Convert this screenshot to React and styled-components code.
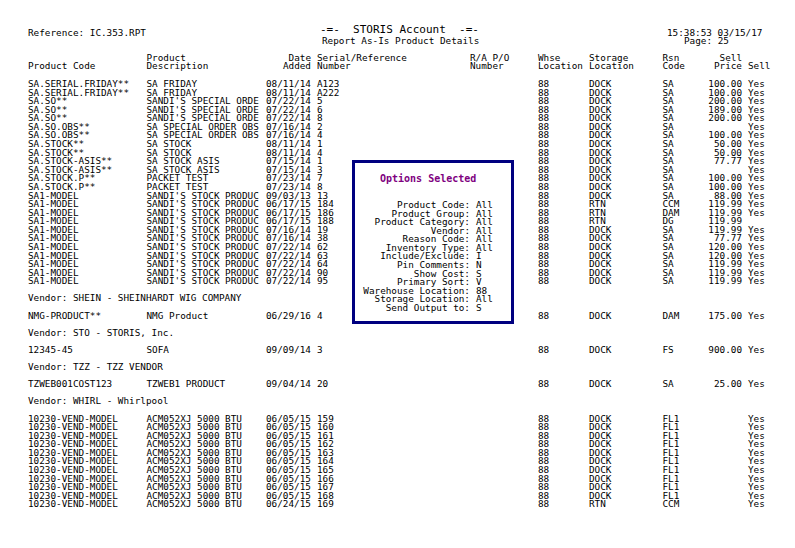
import React from 'react';
import styled, { createGlobalStyle } from 'styled-components';

const GlobalStyle = createGlobalStyle`
  html, body {
    margin: 0;
    padding: 0;
    background: #fff;
  }
`;

const Page = styled.div`
  position: relative;
  width: 795px;
  height: 548px;
  overflow: hidden;
  padding: 24px 0 0 28px;
  box-sizing: border-box;
  font-family: "DejaVu Sans Mono", monospace;
  font-size: 9.33px;
  color: #000;
  white-space: pre;
`;

const TopBar = styled.div`
  display: grid;
  grid-template-columns: 293px 346px auto;
  height: 24px;
`;

const RefLabel = styled.div`
  padding-top: 4px;
  line-height: 9px;
`;

const TitleBlock = styled.div`
  line-height: 8px;
  padding-left: 1px;
`;

const Title = styled.div`
  font-size: 11px;
  line-height: 11px;
  margin: 0 0 2px -2px;
`;

const Stamp = styled.div`
  padding-top: 5px;
  line-height: 8px;
`;

const StampPage = styled.div`
  padding-left: 17px;
`;

const columns = '118.5px 119.5px 51px 153px 68px 51px 73.5px 40px 45.5px 40px';

const HeadRow = styled.div`
  display: grid;
  grid-template-columns: ${columns};
  margin-top: 6px;
  height: 26px;
  line-height: 8px;
`;

const Cell = styled.div`
  text-align: ${(p) => (p.$right ? 'right' : 'left')};
  padding-right: ${(p) => (p.$right ? '6px' : '0')};
`;

const Rows = styled.div`
  display: flex;
  flex-direction: column;
`;

const Row = styled.div`
  display: grid;
  grid-template-columns: ${columns};
  height: 8.58px;
  line-height: 8.58px;
`;

const VendorRow = styled.div`
  height: 8.58px;
  line-height: 8.58px;
  margin: 8.58px 0;
`;

const OptionsBox = styled.div`
  position: absolute;
  left: 352px;
  top: 160px;
  width: 162px;
  height: 164px;
  box-sizing: border-box;
  border: 3px solid #000080;
  background: #fff;
  padding-top: 10px;
`;

const OptionsTitle = styled.div`
  color: #800080;
  font-weight: bold;
  font-size: 10px;
  line-height: 12px;
  padding-left: 25px;
  margin-bottom: 16px;
`;

const OptionRow = styled.div`
  display: grid;
  grid-template-columns: 115px auto;
  column-gap: 6px;
  height: 8.58px;
  line-height: 8.58px;
`;

const OptionLabel = styled.div`
  text-align: right;
`;

const sandi = "SANDI'S SPECIAL ORDE";
const obs = 'SA SPECIAL ORDER OBS';
const stock = "SANDI'S STOCK PRODUC";
const btu = 'ACM052XJ 5000 BTU';

const groups = [
  {
    rows: [
      ['SA.SERIAL.FRIDAY**', 'SA FRIDAY', '08/11/14', 'A123', 'DOCK', 'SA', '100.00', 'Yes'],
      ['SA.SERIAL.FRIDAY**', 'SA FRIDAY', '08/11/14', 'A222', 'DOCK', 'SA', '100.00', 'Yes'],
      ['SA.SO**', sandi, '07/22/14', '5', 'DOCK', 'SA', '200.00', 'Yes'],
      ['SA.SO**', sandi, '07/22/14', '6', 'DOCK', 'SA', '189.00', 'Yes'],
      ['SA.SO**', sandi, '07/22/14', '8', 'DOCK', 'SA', '200.00', 'Yes'],
      ['SA.SO.OBS**', obs, '07/16/14', '2', 'DOCK', 'SA', '', 'Yes'],
      ['SA.SO.OBS**', obs, '07/16/14', '4', 'DOCK', 'SA', '100.00', 'Yes'],
      ['SA.STOCK**', 'SA STOCK', '08/11/14', '1', 'DOCK', 'SA', '50.00', 'Yes'],
      ['SA.STOCK**', 'SA STOCK', '08/11/14', '4', 'DOCK', 'SA', '50.00', 'Yes'],
      ['SA.STOCK-ASIS**', 'SA STOCK ASIS', '07/15/14', '1', 'DOCK', 'SA', '77.77', 'Yes'],
      ['SA.STOCK-ASIS**', 'SA STOCK ASIS', '07/15/14', '3', 'DOCK', 'SA', '', 'Yes'],
      ['SA.STOCK.P**', 'PACKET TEST', '07/23/14', '7', 'DOCK', 'SA', '100.00', 'Yes'],
      ['SA.STOCK.P**', 'PACKET TEST', '07/23/14', '8', 'DOCK', 'SA', '100.00', 'Yes'],
      ['SA1-MODEL', stock, '09/03/13', '13', 'DOCK', 'SA', '88.00', 'Yes'],
      ['SA1-MODEL', stock, '06/17/15', '184', 'RTN', 'CCM', '119.99', 'Yes'],
      ['SA1-MODEL', stock, '06/17/15', '186', 'RTN', 'DAM', '119.99', 'Yes'],
      ['SA1-MODEL', stock, '06/17/15', '188', 'RTN', 'DG', '119.99', ''],
      ['SA1-MODEL', stock, '07/16/14', '19', 'DOCK', 'SA', '119.99', 'Yes'],
      ['SA1-MODEL', stock, '07/16/14', '38', 'DOCK', 'SA', '77.77', 'Yes'],
      ['SA1-MODEL', stock, '07/22/14', '62', 'DOCK', 'SA', '120.00', 'Yes'],
      ['SA1-MODEL', stock, '07/22/14', '63', 'DOCK', 'SA', '120.00', 'Yes'],
      ['SA1-MODEL', stock, '07/22/14', '64', 'DOCK', 'SA', '119.99', 'Yes'],
      ['SA1-MODEL', stock, '07/22/14', '90', 'DOCK', 'SA', '119.99', 'Yes'],
      ['SA1-MODEL', stock, '07/22/14', '95', 'DOCK', 'SA', '119.99', 'Yes'],
    ],
  },
  {
    vendor: 'SHEIN - SHEINHARDT WIG COMPANY',
    rows: [['NMG-PRODUCT**', 'NMG Product', '06/29/16', '4', 'DOCK', 'DAM', '175.00', 'Yes']],
  },
  {
    vendor: 'STO - STORIS, Inc.',
    rows: [['12345-45', 'SOFA', '09/09/14', '3', 'DOCK', 'FS', '900.00', 'Yes']],
  },
  {
    vendor: 'TZZ - TZZ VENDOR',
    rows: [['TZWEB001COST123', 'TZWEB1 PRODUCT', '09/04/14', '20', 'DOCK', 'SA', '25.00', 'Yes']],
  },
  {
    vendor: 'WHIRL - Whirlpool',
    rows: [
      ['10230-VEND-MODEL', btu, '06/05/15', '159', 'DOCK', 'FL1', '', 'Yes'],
      ['10230-VEND-MODEL', btu, '06/05/15', '160', 'DOCK', 'FL1', '', 'Yes'],
      ['10230-VEND-MODEL', btu, '06/05/15', '161', 'DOCK', 'FL1', '', 'Yes'],
      ['10230-VEND-MODEL', btu, '06/05/15', '162', 'DOCK', 'FL1', '', 'Yes'],
      ['10230-VEND-MODEL', btu, '06/05/15', '163', 'DOCK', 'FL1', '', 'Yes'],
      ['10230-VEND-MODEL', btu, '06/05/15', '164', 'DOCK', 'FL1', '', 'Yes'],
      ['10230-VEND-MODEL', btu, '06/05/15', '165', 'DOCK', 'FL1', '', 'Yes'],
      ['10230-VEND-MODEL', btu, '06/05/15', '166', 'DOCK', 'FL1', '', 'Yes'],
      ['10230-VEND-MODEL', btu, '06/05/15', '167', 'DOCK', 'FL1', '', 'Yes'],
      ['10230-VEND-MODEL', btu, '06/05/15', '168', 'DOCK', 'FL1', '', 'Yes'],
      ['10230-VEND-MODEL', btu, '06/24/15', '169', 'RTN', 'CCM', '', 'Yes'],
    ],
  },
];

const options = [
  ['Product Code:', 'All'],
  ['Product Group:', 'All'],
  ['Product Category:', 'All'],
  ['Vendor:', 'All'],
  ['Reason Code:', 'All'],
  ['Inventory Type:', 'All'],
  ['Include/Exclude:', 'I'],
  ['Pin Comments:', 'N'],
  ['Show Cost:', 'S'],
  ['Primary Sort:', 'V'],
  ['Warehouse Location:', '88'],
  ['Storage Location:', 'All'],
  ['Send Output to:', 'S'],
];

const DataRow = ({ row }) => {
  const [code, desc, date, serial, storage, rsn, price, sell] = row;
  return (
    <Row>
      <Cell>{code}</Cell>
      <Cell>{desc}</Cell>
      <Cell>{date}</Cell>
      <Cell>{serial}</Cell>
      <Cell />
      <Cell>88</Cell>
      <Cell>{storage}</Cell>
      <Cell>{rsn}</Cell>
      <Cell $right>{price}</Cell>
      <Cell>{sell}</Cell>
    </Row>
  );
};

export default function App() {
  return (
    <Page>
      <GlobalStyle />
      <TopBar>
        <RefLabel>Reference: IC.353.RPT</RefLabel>
        <TitleBlock>
          <Title>-=-  STORIS Account  -=-</Title>
          Report As-Is Product Details
        </TitleBlock>
        <Stamp>
          15:38:53 03/15/17
          <StampPage>Page: 25</StampPage>
        </Stamp>
      </TopBar>
      <HeadRow>
        <Cell>{'\nProduct Code'}</Cell>
        <Cell>{'Product\nDescription'}</Cell>
        <Cell $right>{'Date\nAdded'}</Cell>
        <Cell>{'Serial/Reference\nNumber'}</Cell>
        <Cell>{'R/A P/O\nNumber'}</Cell>
        <Cell>{'Whse\nLocation'}</Cell>
        <Cell>{'Storage\nLocation'}</Cell>
        <Cell>{'Rsn\nCode'}</Cell>
        <Cell $right>{'Sell\nPrice'}</Cell>
        <Cell>{'\nSell'}</Cell>
      </HeadRow>
      <Rows>
        {groups.map((group, i) => (
          <React.Fragment key={i}>
            {group.vendor && <VendorRow>Vendor: {group.vendor}</VendorRow>}
            {group.rows.map((row, j) => (
              <DataRow key={j} row={row} />
            ))}
          </React.Fragment>
        ))}
      </Rows>
      <OptionsBox>
        <OptionsTitle>Options Selected</OptionsTitle>
        {options.map(([label, value]) => (
          <OptionRow key={label}>
            <OptionLabel>{label}</OptionLabel>
            <div>{value}</div>
          </OptionRow>
        ))}
      </OptionsBox>
    </Page>
  );
}
